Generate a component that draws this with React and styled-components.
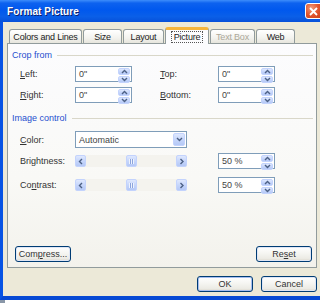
import React from 'react';
import styled, { createGlobalStyle } from 'styled-components';

const Global = createGlobalStyle`
  html, body { margin: 0; padding: 0; background: #fff; }
  body {
    font-family: "Liberation Sans", Arial, sans-serif;
    font-size: 9px;
    color: #222;
  }
  u { text-decoration: underline; text-underline-offset: 1px; }
`;

const Screen = styled.div`
  width: 320px;
  height: 303px;
  overflow: hidden;
  background: #fff;
`;

const Window = styled.div`
  width: 330px;
  height: 300px;
  display: flex;
  flex-direction: column;
`;

const TitleBar = styled.div`
  height: 22px;
  flex-shrink: 0;
  display: flex;
  align-items: center;
  justify-content: space-between;
  padding: 0 0 0 7px;
  background: linear-gradient(180deg, #3d8dfb 0%, #0d62ef 14%, #0058ee 45%, #0a5fe8 75%, #0751d9 100%);
`;

const Title = styled.div`
  color: #fff;
  font-weight: bold;
  font-size: 10px;
  text-shadow: 1px 1px 0 #0a1f6e;
  letter-spacing: 0.1px;
`;

const CloseButton = styled.div`
  width: 20px;
  height: 16px;
  margin-right: 5px;
  margin-left: auto;
  border: 1px solid #fff;
  border-radius: 3px;
  background: radial-gradient(circle at 30% 30%, #f29a7a 0%, #e0532c 45%, #c23a12 100%);
  display: flex;
  align-items: center;
  padding-left: 3px;
  box-sizing: border-box;
`;

const Frame = styled.div`
  flex: 1;
  background: #ece9d8;
  border-left: 3px solid #0753e4;
  border-bottom: 4px solid #0649d4;
  padding: 5px 0 4px 4px;
  display: flex;
  flex-direction: column;
`;

const TabRow = styled.div`
  position: relative;
  z-index: 1;
  height: 17px;
  display: flex;
  align-items: flex-end;
  gap: 1px;
  padding-left: 2px;
`;

const Tab = styled.div`
  width: ${p => p.$w}px;
  height: ${p => (p.$active ? 17 : 14)}px;
  margin-bottom: ${p => (p.$active ? 0 : 1)}px;
  box-sizing: border-box;
  border: 1px solid #919b9c;
  border-bottom: none;
  border-top: ${p => (p.$active ? '3px solid #f5b53c' : '1px solid #919b9c')};
  border-radius: 3px 3px 0 0;
  background: ${p => (p.$active ? '#fcfcfe' : 'linear-gradient(180deg, #ffffff 0%, #f3f3ef 60%, #e6e5dd 100%)')};
  color: ${p => (p.$disabled ? '#aca899' : '#222')};
  display: flex;
  align-items: center;
  justify-content: center;
  letter-spacing: -0.2px;
  padding-top: ${p => (p.$active ? 0 : 1)}px;
`;

const Focus = styled.span`
  outline: 1px dotted #555;
  padding: 0 2px;
  line-height: 10px;
`;

const Panel = styled.div`
  width: 310px;
  height: 225px;
  margin-top: -1px;
  box-sizing: border-box;
  border: 1px solid #919b9c;
  background: linear-gradient(180deg, #fcfcfe 0%, #f9f9f6 60%, #f3f2ec 100%);
  padding: 0 3px 5px 4px;
  display: flex;
  flex-direction: column;
`;

const GroupHeader = styled.div`
  display: flex;
  align-items: center;
  gap: 5px;
  height: 10px;
  margin-top: ${p => p.$top}px;
  color: #1f4fcf;

  &::after {
    content: '';
    flex: 1;
    height: 1px;
    background: #d9d7c9;
  }
`;

const Row = styled.div`
  display: flex;
  align-items: center;
  height: ${p => p.$h || 16}px;
  padding-left: 8px;
  margin-top: ${p => p.$top}px;
`;

const Label = styled.div`
  width: ${p => p.$w}px;
  margin-left: ${p => p.$gap || 0}px;
  flex-shrink: 0;
  color: #333;
`;

const Field = styled.div`
  width: ${p => p.$w}px;
  height: ${p => p.$h || 16}px;
  margin-left: ${p => p.$gap || 0}px;
  box-sizing: border-box;
  border: 1px solid #7f9db9;
  background: #fff;
  display: flex;
  align-items: stretch;
  flex-shrink: 0;
`;

const FieldText = styled.div`
  flex: 1;
  display: flex;
  align-items: center;
  padding-left: 3px;
  color: #444;
`;

const SpinCol = styled.div`
  width: 12px;
  margin: 1px;
  display: flex;
  flex-direction: column;
  gap: 1px;
`;

const BlueBtn = styled.div`
  flex: ${p => (p.$w ? '0 0 auto' : 1)};
  width: ${p => (p.$w ? `${p.$w}px` : 'auto')};
  box-sizing: border-box;
  border: 1px solid #c3d3fd;
  border-radius: 2px;
  background: linear-gradient(180deg, #dfe8fe 0%, #c6d6fb 50%, #b4c8f6 100%);
  display: flex;
  align-items: center;
  justify-content: center;
`;

const Slider = styled.div`
  width: 112px;
  height: 12px;
  display: flex;
  background: #f4f3ee;
  flex-shrink: 0;
`;

const TrackGap = styled.div`
  flex: ${p => p.$grow};
`;

const Grip = styled.div`
  width: 5px;
  height: 5px;
  background: repeating-linear-gradient(90deg, #eef3fe 0 1px, #8ca4dc 1px 2px);
`;

const Spacer = styled.div`
  flex: 1;
`;

const ButtonRow = styled.div`
  display: flex;
  justify-content: space-between;
  padding: 0 1px 0 3px;
`;

const Button = styled.div`
  width: 56px;
  height: 16px;
  box-sizing: border-box;
  border: 1px solid #003c74;
  border-radius: 3px;
  background: linear-gradient(180deg, #ffffff 0%, #f4f4f0 50%, #ebeae3 85%, #d6d0c5 100%);
  box-shadow: inset 0 0 0 1px ${p => (p.$default ? '#a5bef0' : '#dfe6f5')};
  display: flex;
  align-items: center;
  justify-content: center;
  color: #333;
`;

const Footer = styled.div`
  width: 310px;
  margin-top: 8px;
  display: flex;
  justify-content: flex-end;
  gap: 8px;
`;

const Taskbit = styled.div`
  width: 5px;
  height: 3px;
  background: #8a97a8;
`;

const Chevron = ({ dir }) => {
  const paths = {
    up: 'M1 4 L3.5 1.5 L6 4',
    down: 'M1 1 L3.5 3.5 L6 1',
    left: 'M4 1 L1.5 3.5 L4 6',
    right: 'M1.5 1 L4 3.5 L1.5 6',
  };
  const vertical = dir === 'up' || dir === 'down';
  return (
    <svg width={vertical ? 7 : 6} height={vertical ? 5 : 7} viewBox={vertical ? '0 0 7 5' : '0 0 6 7'}>
      <path d={paths[dir]} fill="none" stroke="#4d6185" strokeWidth="1.4" />
    </svg>
  );
};

const Spin = ({ value, gap }) => (
  <Field $w={57} $gap={gap}>
    <FieldText>{value}</FieldText>
    <SpinCol>
      <BlueBtn><Chevron dir="up" /></BlueBtn>
      <BlueBtn><Chevron dir="down" /></BlueBtn>
    </SpinCol>
  </Field>
);

const Scroller = ({ value }) => (
  <Slider>
    <BlueBtn $w={11}><Chevron dir="left" /></BlueBtn>
    <TrackGap $grow={value} />
    <BlueBtn $w={11}><Grip /></BlueBtn>
    <TrackGap $grow={100 - value} />
    <BlueBtn $w={11}><Chevron dir="right" /></BlueBtn>
  </Slider>
);

const tabs = [
  { label: 'Colors and Lines', w: 73 },
  { label: 'Size', w: 39 },
  { label: 'Layout', w: 41 },
  { label: 'Picture', w: 44, active: true },
  { label: 'Text Box', w: 45, disabled: true },
  { label: 'Web', w: 39 },
];

export default function App() {
  return (
    <Screen>
      <Global />
      <Window>
        <TitleBar>
          <Title>Format Picture</Title>
          <CloseButton>
            <svg width="9" height="9" viewBox="0 0 9 9">
              <path d="M1 1 L8 8 M8 1 L1 8" stroke="#fff" strokeWidth="1.8" />
            </svg>
          </CloseButton>
        </TitleBar>
        <Frame>
          <TabRow>
            {tabs.map(t => (
              <Tab key={t.label} $w={t.w} $active={t.active} $disabled={t.disabled}>
                {t.active ? <Focus>{t.label}</Focus> : t.label}
              </Tab>
            ))}
          </TabRow>
          <Panel>
            <GroupHeader $top={6}>Crop from</GroupHeader>
            <Row $top={6}>
              <Label $w={55}><u>L</u>eft:</Label>
              <Spin value={'0"'} />
              <Label $w={58} $gap={28}><u>T</u>op:</Label>
              <Spin value={'0"'} />
            </Row>
            <Row $top={5}>
              <Label $w={55}><u>R</u>ight:</Label>
              <Spin value={'0"'} />
              <Label $w={58} $gap={28}><u>B</u>ottom:</Label>
              <Spin value={'0"'} />
            </Row>
            <GroupHeader $top={10}>Image control</GroupHeader>
            <Row $top={8} $h={17}>
              <Label $w={55}><u>C</u>olor:</Label>
              <Field $w={112} $h={17}>
                <FieldText>Automatic</FieldText>
                <SpinCol>
                  <BlueBtn><Chevron dir="down" /></BlueBtn>
                </SpinCol>
              </Field>
            </Row>
            <Row $top={5}>
              <Label $w={55}>Bri<u>g</u>htness:</Label>
              <Scroller value={50} />
              <Spin value="50 %" gap={31} />
            </Row>
            <Row $top={8}>
              <Label $w={55}>Co<u>n</u>trast:</Label>
              <Scroller value={50} />
              <Spin value="50 %" gap={31} />
            </Row>
            <Spacer />
            <ButtonRow>
              <Button>Com<u>p</u>ress...</Button>
              <Button>Re<u>s</u>et</Button>
            </ButtonRow>
          </Panel>
          <Footer>
            <Button $default>OK</Button>
            <Button>Cancel</Button>
          </Footer>
        </Frame>
      </Window>
      <Taskbit />
    </Screen>
  );
}
